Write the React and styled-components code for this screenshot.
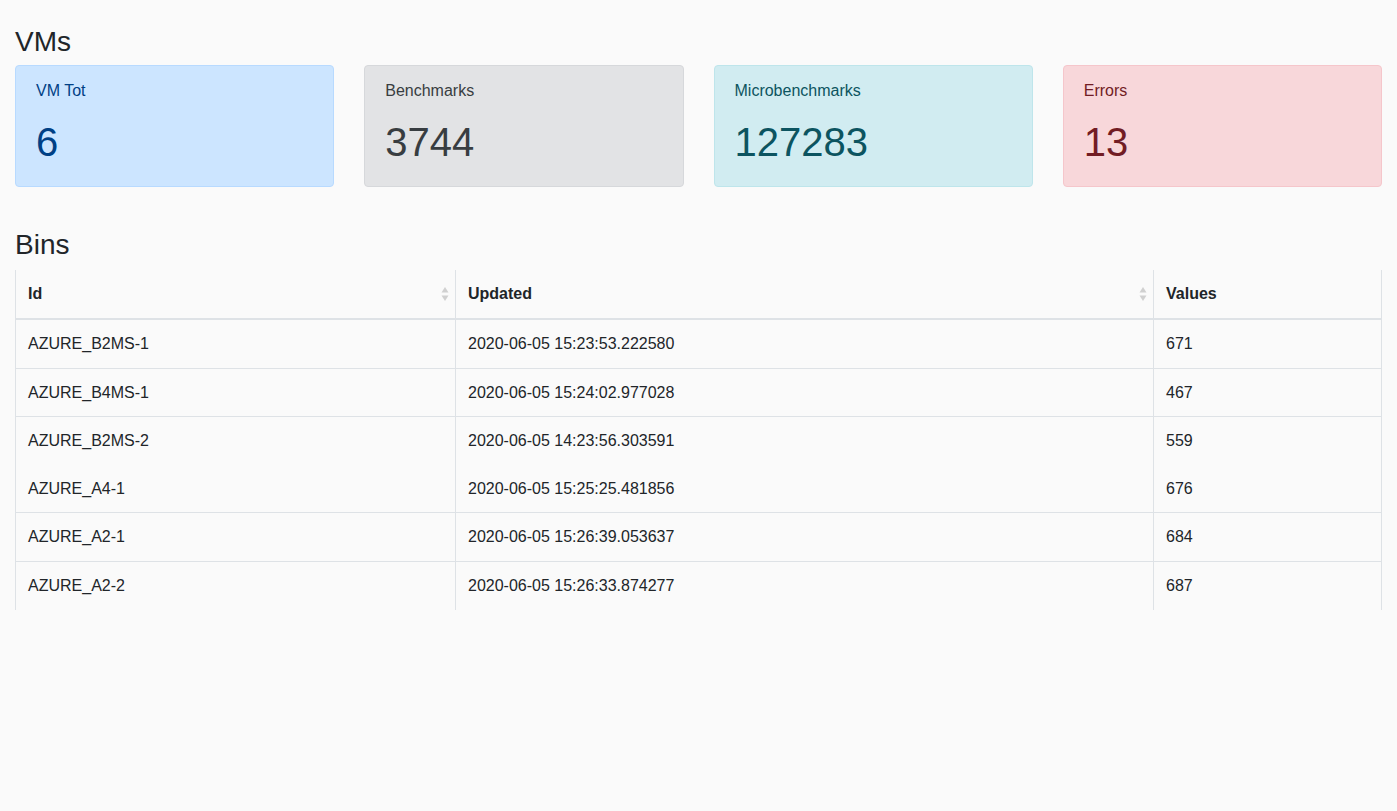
import React from "react";
import styled, { createGlobalStyle } from "styled-components";

const GlobalStyle = createGlobalStyle`
    body {
        margin: 0;
        background: #fafafa;
        font-family: "Liberation Sans", Arial, sans-serif;
        color: #212529;
        font-size: 16px;
    }
`;

const Page = styled.div`
    padding: 25px 15px 40px;
`;

const Heading = styled.h3`
    margin: 0 0 6px;
    font-size: 28px;
    font-weight: 400;
    line-height: 34px;
`;

const CardRow = styled.div`
    display: grid;
    grid-template-columns: repeat(4, 1fr);
    gap: 30px;
    margin-bottom: 41px;
`;

const tones = {
    primary: { bg: "#cce5ff", border: "#b8daff", color: "#004085" },
    secondary: { bg: "#e2e3e5", border: "#d6d8db", color: "#383d41" },
    info: { bg: "#d1ecf1", border: "#bee5eb", color: "#0c5460" },
    danger: { bg: "#f8d7da", border: "#f5c6cb", color: "#721c24" },
};

const Card = styled.div`
    background: ${(p) => tones[p.$tone].bg};
    border: 1px solid ${(p) => tones[p.$tone].border};
    color: ${(p) => tones[p.$tone].color};
    border-radius: 4px;
    padding: 13px 20px 20px;
`;

const CardLabel = styled.div`
    font-size: 16px;
    line-height: 24px;
    margin-bottom: 15px;
`;

const CardValue = styled.div`
    font-size: 40px;
    line-height: 48px;
`;

const Table = styled.table`
    width: 100%;
    margin-top: 8px;
    table-layout: fixed;
    border-collapse: collapse;
    border-left: 1px solid #dee2e6;
    border-right: 1px solid #dee2e6;
`;

const Th = styled.th`
    position: relative;
    box-sizing: border-box;
    text-align: left;
    font-weight: 700;
    padding: 12px;
    line-height: 24px;
    border-bottom: 2px solid #dee2e6;
    border-left: 1px solid #dee2e6;
    width: ${(p) => p.$width || "auto"};
`;

const Td = styled.td`
    padding: 12px;
    line-height: 23.6px;
    border-left: 1px solid #dee2e6;
    border-top: ${(p) => (p.$noBorder ? "none" : "1px solid #dee2e6")};
`;

const SortIcon = styled.svg`
    position: absolute;
    right: 6px;
    top: 16px;
`;

const Sort = () => (
    <SortIcon width="8" height="16" viewBox="0 0 8 16">
        <path d="M4 1 L7.5 6.5 L0.5 6.5 Z" fill="#d0d0d0" />
        <path d="M4 15 L7.5 9.5 L0.5 9.5 Z" fill="#d0d0d0" />
    </SortIcon>
);

const cards = [
    { label: "VM Tot", value: "6", tone: "primary" },
    { label: "Benchmarks", value: "3744", tone: "secondary" },
    { label: "Microbenchmarks", value: "127283", tone: "info" },
    { label: "Errors", value: "13", tone: "danger" },
];

const bins = [
    ["AZURE_B2MS-1", "2020-06-05 15:23:53.222580", 671],
    ["AZURE_B4MS-1", "2020-06-05 15:24:02.977028", 467],
    ["AZURE_B2MS-2", "2020-06-05 14:23:56.303591", 559],
    ["AZURE_A4-1", "2020-06-05 15:25:25.481856", 676],
    ["AZURE_A2-1", "2020-06-05 15:26:39.053637", 684],
    ["AZURE_A2-2", "2020-06-05 15:26:33.874277", 687],
];

export default function App() {
    return (
        <Page>
            <GlobalStyle />
            <Heading>VMs</Heading>
            <CardRow>
                {cards.map((c) => (
                    <Card key={c.label} $tone={c.tone}>
                        <CardLabel>{c.label}</CardLabel>
                        <CardValue>{c.value}</CardValue>
                    </Card>
                ))}
            </CardRow>
            <Heading>Bins</Heading>
            <Table>
                <thead>
                    <tr>
                        <Th $width="440px">Id<Sort /></Th>
                        <Th $width="698px">Updated<Sort /></Th>
                        <Th>Values</Th>
                    </tr>
                </thead>
                <tbody>
                    {bins.map((b, i) => (
                        <tr key={b[0]}>
                            <Td $noBorder={i === 3}>{b[0]}</Td>
                            <Td $noBorder={i === 3}>{b[1]}</Td>
                            <Td $noBorder={i === 3}>{b[2]}</Td>
                        </tr>
                    ))}
                </tbody>
            </Table>
        </Page>
    );
}
